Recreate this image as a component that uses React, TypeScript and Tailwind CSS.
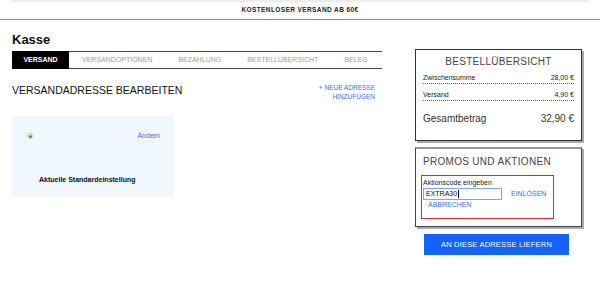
const steps = ["VERSANDOPTIONEN", "BEZAHLUNG", "BESTELLÜBERSICHT", "BELEG"];

function TopBanner() {
  return (
    <div className="h-[20px] border-b border-[#8c8c8c]">
      <div className="mx-[11px] h-[2px] bg-[#eeeeee]" />
      <p className="text-center text-[6.5px] font-bold leading-[16px] tracking-[0.4px] text-[#222]">
        KOSTENLOSER VERSAND AB 60€
      </p>
    </div>
  );
}

function StepTabs() {
  return (
    <div className="mt-[4px] flex h-[18px] text-[7px]">
      <div className="flex w-[57px] items-center justify-center bg-black font-bold text-white">
        VERSAND
      </div>
      <div className="flex flex-1 items-center border-y border-[#444] text-[#a0a0a0]">
        {steps.map((s) => (
          <span key={s} className="px-[13px]">
            {s}
          </span>
        ))}
      </div>
    </div>
  );
}

function AddressCard() {
  return (
    <div className="mt-[14px] h-[81px] w-[162px] bg-[#f0f7fd]">
      <div className="flex items-center justify-between pl-[15px] pr-[14px] pt-[15px]">
        <span className="flex h-[6px] w-[6px] items-center justify-center rounded-full border border-[#c8c8c8] bg-[#eee]">
          <span className="h-[3px] w-[3px] rounded-full bg-[#777]" />
        </span>
        <span className="text-[7px] leading-[10px] text-[#3a6ff2]">Ändern</span>
      </div>
      <p className="mt-[34px] pl-[27px] text-[7px] font-bold leading-[10px] text-[#111]">
        Aktuelle Standardeinstellung
      </p>
    </div>
  );
}

function SummaryRow({ label, value }: { label: string; value: string }) {
  return (
    <div className="flex justify-between border-b border-dotted border-[#666] text-[7px] leading-[10px] text-[#222]">
      <span>{label}</span>
      <span>{value}</span>
    </div>
  );
}

function OrderSummary() {
  return (
    <div className="h-[92px] border border-[#333] bg-white shadow-[2px_2px_0_#aaa]">
      <h3 className="pt-[5px] text-center text-[10px] leading-[14px] tracking-[0.3px] text-[#444]">
        BESTELLÜBERSICHT
      </h3>
      <div className="px-[7px]">
        <div className="pt-[4px]">
          <SummaryRow label="Zwischensumme" value="28,00 €" />
        </div>
        <div className="pt-[6px]">
          <SummaryRow label="Versand" value="4,90 €" />
        </div>
        <div className="mt-[11px] flex justify-between text-[10px] leading-[14px] text-[#333]">
          <span>Gesamtbetrag</span>
          <span>32,90 €</span>
        </div>
      </div>
    </div>
  );
}

function PromoBox() {
  return (
    <div className="mt-[6px] border border-t-2 border-[#444] border-t-[#999] bg-white px-[5px] pb-[7px] shadow-[2px_2px_0_#aaa]">
      <h3 className="pt-[6px] pl-[2px] text-[10px] leading-[14px] tracking-[0.3px] text-[#444]">
        PROMOS UND AKTIONEN
      </h3>
      <div className="mt-[6px] h-[44px] w-[133px] border border-[#e0262e] pl-[1px] pt-[2px]">
        <p className="text-[7px] leading-[9px] text-[#222]">Aktionscode eingeben</p>
        <div className="mt-[1px] flex items-center">
          <div className="flex h-[12px] w-[79px] items-center border border-[#7aa6e6] px-[2px] text-[7px] text-[#111]">
            EXTRA30<span className="ml-[0.5px] h-[8px] w-[1px] bg-black" />
          </div>
          <span className="ml-[9px] text-[7px] text-[#3a6ff2]">EINLÖSEN</span>
        </div>
        <p className="pl-[5px] text-[7px] leading-[10px] text-[#3a6ff2]">ABBRECHEN</p>
      </div>
    </div>
  );
}

export default function App() {
  return (
    <div className="h-[281px] w-[600px] overflow-hidden bg-white font-['Liberation_Sans',Arial,sans-serif] text-[#111]">
      <TopBanner />
      <div className="flex pl-[12px] pt-[12px]">
        <main className="w-[370px]">
          <h1 className="text-[13px] font-bold leading-[15px] text-[#111]">Kasse</h1>
          <StepTabs />
          <div className="mt-[15px] flex h-[18px] items-start justify-between">
            <h2 className="text-[10.5px] leading-[12px] text-[#111]">VERSANDADRESSE BEARBEITEN</h2>
            <a className="mr-[7px] -mt-[1px] text-right text-[6.5px] leading-[9px] text-[#3a6ff2]">
              + NEUE ADRESSE
              <br />
              HINZUFÜGEN
            </a>
          </div>
          <AddressCard />
        </main>
        <aside className="ml-[33px] mt-[17px] w-[167px]">
          <OrderSummary />
          <PromoBox />
          <button className="ml-[9px] mt-[7px] h-[21px] w-[145px] bg-[#1462f7] text-[7.5px] tracking-[0.2px] text-white">
            AN DIESE ADRESSE LIEFERN
          </button>
        </aside>
      </div>
    </div>
  );
}
